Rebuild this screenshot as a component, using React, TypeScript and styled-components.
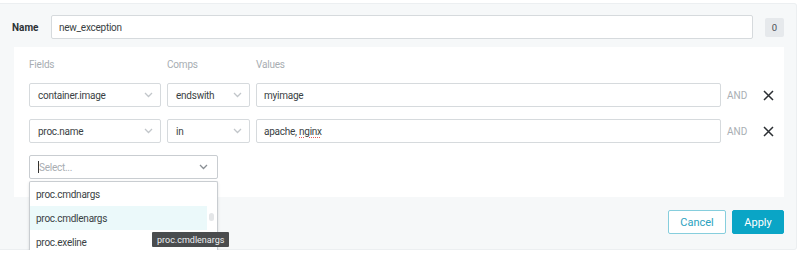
import * as React from "react";
import styled, {createGlobalStyle} from "styled-components";

const GlobalStyle = createGlobalStyle`
    html, body {
        margin: 0;
        padding: 0;
        background: #ffffff;
        font-family: Roboto, "Liberation Sans", sans-serif;
        color: #333333;
        overflow: hidden;
    }
`;

const Chevron = ({dark}: {dark?: boolean}) => (
    <svg width="9" height="6" viewBox="0 0 9 6">
        <polyline
            points="1,1 4.5,4.5 8,1"
            fill="none"
            stroke={dark ? "#8a8f94" : "#c2c6ca"}
            strokeWidth="1.3"
        />
    </svg>
);

const CloseIcon = () => (
    <svg width="11" height="11" viewBox="0 0 11 11">
        <path d="M1 1 L10 10 M10 1 L1 10" stroke="#2b2f33" strokeWidth="1.5" fill="none" />
    </svg>
);

type Condition = {
    field: string;
    comp: string;
    value: string;
    misspelled?: string;
};

const conditions: Condition[] = [
    {field: "container.image", comp: "endswith", value: "myimage"},
    {field: "proc.name", comp: "in", value: "apache, ", misspelled: "nginx"},
];

const options = ["proc.cmdnargs", "proc.cmdlenargs", "proc.exeline"];

export default function App() {
    return (
        <>
            <GlobalStyle />
            <Panel>
                <NameRow>
                    <NameLabel>Name</NameLabel>
                    <TextBox>new_exception</TextBox>
                    <Badge>0</Badge>
                </NameRow>

                <RulesCard>
                    <Grid>
                        <ColumnTitle>Fields</ColumnTitle>
                        <ColumnTitle>Comps</ColumnTitle>
                        <ColumnTitle>Values</ColumnTitle>
                        <span />
                        <span />

                        {conditions.map((c) => (
                            <React.Fragment key={c.field}>
                                <SelectBox>
                                    <span>{c.field}</span>
                                    <Chevron />
                                </SelectBox>
                                <SelectBox>
                                    <span>{c.comp}</span>
                                    <Chevron />
                                </SelectBox>
                                <TextBox>
                                    {c.value}
                                    {c.misspelled && <Misspelled>{c.misspelled}</Misspelled>}
                                </TextBox>
                                <AndLabel>AND</AndLabel>
                                <RemoveButton>
                                    <CloseIcon />
                                </RemoveButton>
                            </React.Fragment>
                        ))}
                    </Grid>

                    <PickerWrap>
                        <PickerBox>
                            <Placeholder>
                                <Caret />
                                Select...
                            </Placeholder>
                            <Chevron dark />
                        </PickerBox>
                        <Menu>
                            {options.map((o, i) => (
                                <MenuItem key={o} $active={i === 1}>{o}</MenuItem>
                            ))}
                            <ScrollThumb />
                        </Menu>
                        <Tooltip>proc.cmdlenargs</Tooltip>
                    </PickerWrap>
                </RulesCard>

                <Footer>
                    <CancelButton>Cancel</CancelButton>
                    <ApplyButton>Apply</ApplyButton>
                </Footer>
            </Panel>
        </>
    );
}

const Panel = styled.div`
    box-sizing: border-box;
    margin-top: 3px;
    width: 797px;
    height: 247px;
    background: #f6f8f9;
    border: 1px solid #eceff1;
    border-left: none;
    border-radius: 0 3px 3px 0;
    padding: 11px 12px 0 12px;
`;

const NameRow = styled.div`
    display: flex;
    align-items: center;
    height: 24px;
`;

const NameLabel = styled.div`
    width: 39px;
    font-size: 10px;
    font-weight: 700;
    color: #2d3236;
`;

const TextBox = styled.div`
    box-sizing: border-box;
    flex: 1;
    height: 24px;
    display: flex;
    align-items: center;
    padding: 0 7px;
    background: #ffffff;
    border: 1px solid #d6dadd;
    border-radius: 2px;
    font-size: 10px;
    letter-spacing: -0.25px;
    color: #3a3f44;
    white-space: pre;
`;

const Misspelled = styled.span`
    text-decoration: underline dotted #e2595b;
    text-underline-offset: 2px;
`;

const Badge = styled.div`
    margin-left: 12px;
    width: 19px;
    height: 19px;
    display: flex;
    align-items: center;
    justify-content: center;
    background: #e6e9ec;
    border-radius: 2px;
    font-size: 9.5px;
    color: #4a4f54;
`;

const RulesCard = styled.div`
    position: relative;
    box-sizing: border-box;
    margin: 8px 0 0 2px;
    width: 770px;
    height: 150px;
    background: #ffffff;
    padding: 10px 0 0 15px;
`;

const Grid = styled.div`
    display: grid;
    grid-template-columns: 132px 83px 465px 30px 11px;
    grid-template-rows: 14px 24px 24px;
    column-gap: 6px;
    row-gap: 12px;
    align-items: center;
`;

const ColumnTitle = styled.div`
    font-size: 10px;
    letter-spacing: -0.2px;
    color: #a7adb2;
`;

const SelectBox = styled.div`
    box-sizing: border-box;
    height: 24px;
    display: flex;
    align-items: center;
    justify-content: space-between;
    padding: 0 7px 0 8px;
    background: #ffffff;
    border: 1px solid #d6dadd;
    border-radius: 2px;
    font-size: 10px;
    letter-spacing: -0.25px;
    color: #3a3f44;
`;

const AndLabel = styled.div`
    font-size: 10px;
    color: #a9aeb3;
`;

const RemoveButton = styled.div`
    display: flex;
    align-items: center;
`;

const PickerWrap = styled.div`
    position: relative;
    margin-top: 12px;
    width: 189px;
`;

const PickerBox = styled(SelectBox)`
    border-color: #c9cdd1;
    padding-right: 9px;
`;

const Placeholder = styled.span`
    display: flex;
    align-items: center;
    color: #a8adb2;
`;

const Caret = styled.span`
    display: inline-block;
    width: 1px;
    height: 12px;
    background: #333;
`;

const Menu = styled.div`
    position: absolute;
    top: 26px;
    left: 0;
    box-sizing: border-box;
    width: 189px;
    height: 90px;
    background: #ffffff;
    border: 1px solid #c9cdd1;
    border-bottom: none;
    border-radius: 2px 2px 0 0;
    box-shadow: 0 1px 3px rgba(0, 0, 0, 0.12);
    padding-right: 10px;
    z-index: 2;
`;

const MenuItem = styled.div<{$active?: boolean}>`
    height: 24px;
    display: flex;
    align-items: center;
    padding-left: 6px;
    font-size: 10px;
    letter-spacing: -0.25px;
    color: #3a3f44;
    background: ${(p) => (p.$active ? "#ebf9fa" : "transparent")};
`;

const ScrollThumb = styled.div`
    position: absolute;
    top: 31px;
    right: 3px;
    width: 5px;
    height: 8px;
    border-radius: 3px;
    background: #e4e6e8;
`;

const Tooltip = styled.div`
    position: absolute;
    top: 77px;
    left: 123px;
    z-index: 3;
    padding: 0 5px;
    height: 15px;
    display: flex;
    align-items: center;
    background: #4a4c4e;
    border-radius: 1px;
    font-size: 9px;
    color: #eef0f2;
    white-space: nowrap;
`;

const Footer = styled.div`
    display: flex;
    justify-content: flex-end;
    gap: 6px;
    width: 772px;
    margin-top: 13px;
`;

const ButtonBase = styled.button`
    box-sizing: border-box;
    height: 24px;
    border-radius: 2px;
    font-family: Roboto, "Liberation Sans", sans-serif;
    font-size: 11px;
    padding: 0;
    cursor: pointer;
`;

const CancelButton = styled(ButtonBase)`
    width: 58px;
    background: #ffffff;
    border: 1px solid #86cedd;
    color: #2aa2c0;
`;

const ApplyButton = styled(ButtonBase)`
    width: 52px;
    background: #0aa5c6;
    border: 1px solid #0aa5c6;
    color: #ffffff;
`;
